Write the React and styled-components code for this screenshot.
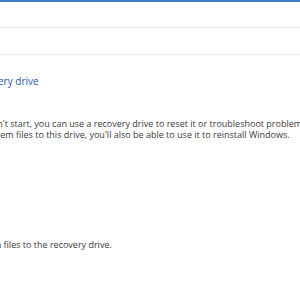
import React from 'react'
import styled, { createGlobalStyle } from 'styled-components'

const GlobalStyle = createGlobalStyle`
    html, body {
        margin: 0;
        padding: 0;
        background: #ffffff;
    }
`;

const Frame = styled.div`
    width: 300px;
    height: 300px;
    overflow: hidden;
    background: #ffffff;
    font-family: "Open Sans", "Noto Sans", sans-serif;
`;

const TitleBar = styled.div`
    height: 2px;
    background: #3f7dc3;
`;

const ChromeBand = styled.div`
    height: ${({h}) => h}px;
    border-bottom: 1px solid #ececec;
`;

const Content = styled.div`
    margin-left: -77px;
    width: 700px;
`;

const Heading = styled.h1`
    margin: 18px 0 0 8px;
    font-size: 10px;
    line-height: 16px;
    font-weight: 500;
    color: #2a55a6;
    white-space: nowrap;
`;

const Body = styled.div`
    margin-top: 30px;
    font-size: 9px;
    line-height: 10.5px;
    color: #3a3a3a;
`;

const Line = styled.div`
    white-space: nowrap;
`;

const Option = styled.label`
    display: flex;
    align-items: center;
    gap: 4px;
    margin-top: 99px;
    font-size: 9px;
    line-height: 11px;
    color: #3a3a3a;
    white-space: nowrap;
`;

const Checkbox = styled.span`
    width: 9px;
    height: 9px;
    border: 1px solid #333;
    box-sizing: border-box;
`;

export default function App() {
    return (
        <Frame>
            <GlobalStyle />
            <TitleBar />
            <ChromeBand h={25} />
            <ChromeBand h={26} />
            <Content>
                <Heading>Create a recovery drive</Heading>
                <Body>
                    <Line>Even if your PC can't start, you can use a recovery drive to reset it or troubleshoot problems.</Line>
                    <Line>If you back up system files to this drive, you'll also be able to use it to reinstall Windows.</Line>
                </Body>
                <Option>
                    <Checkbox />
                    Back up system files to the recovery drive.
                </Option>
            </Content>
        </Frame>
    )
}
